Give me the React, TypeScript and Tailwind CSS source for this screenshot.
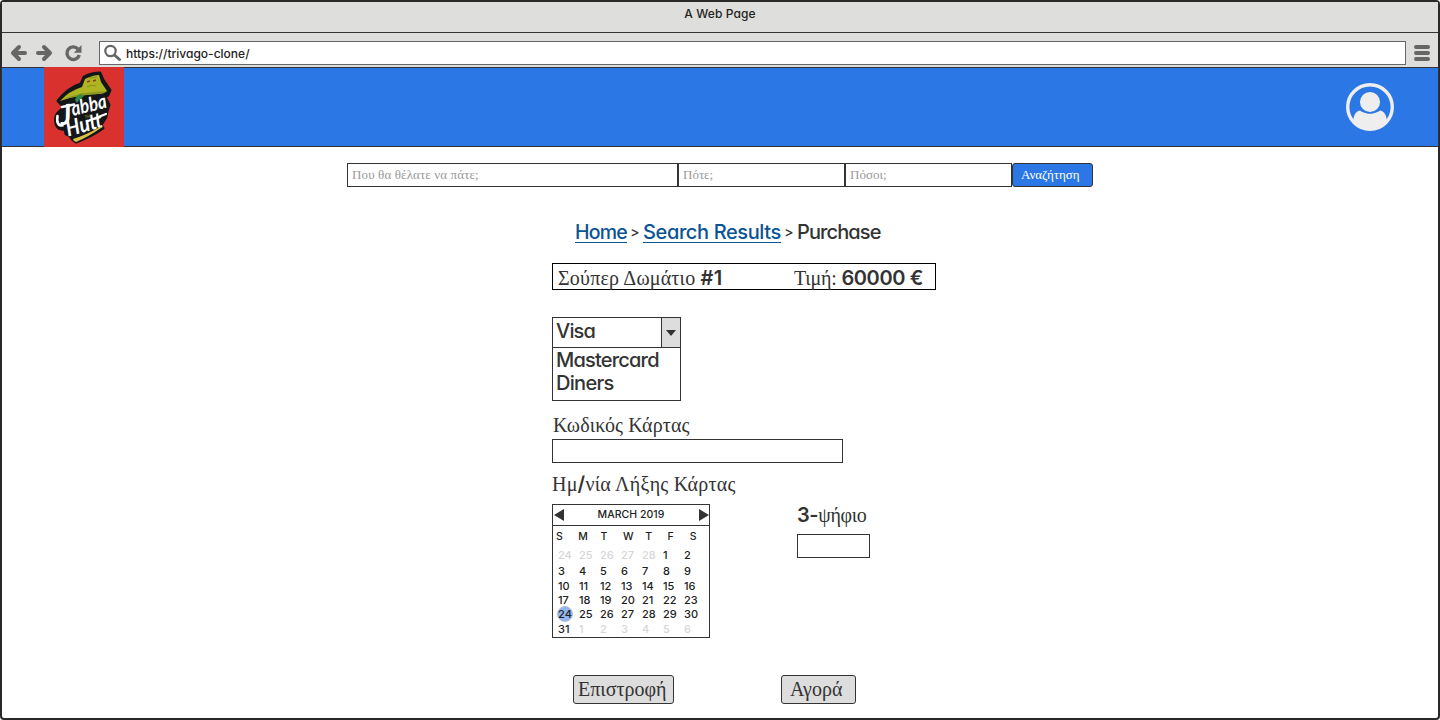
import React from "react";

const sans = "font-['Inter','Liberation_Sans',sans-serif] [font-feature-settings:'cv11'] font-medium";
const sansBold = "font-['Inter','Liberation_Sans',sans-serif] [font-feature-settings:'cv11'] font-semibold";
const serif = "font-['Liberation_Serif',serif] font-normal";

const weekdays = ["S", "M", "T", "W", "T", "F", "S"];
const weeks = [
  [24, 25, 26, 27, 28, 1, 2],
  [3, 4, 5, 6, 7, 8, 9],
  [10, 11, 12, 13, 14, 15, 16],
  [17, 18, 19, 20, 21, 22, 23],
  [24, 25, 26, 27, 28, 29, 30],
  [31, 1, 2, 3, 4, 5, 6],
];

function Logo() {
  return (
    <svg viewBox="0 0 80 80" className="h-[80px] w-[80px] shrink-0 font-['Lato',sans-serif] font-bold italic">
      <rect width="80" height="80" fill="#d9322e" />
      <path d="M14 34Q24 21 37 17L40 10Q48 6 56 6L59 13L66 23L64 28L61 30L65 38L63 44L62 50L57 58L59 61Q48 69 32 75L28 72L26 69L22 67L21 62Q14 63 12 57Q10 49 15 45L20 40Z" fill="#14171a" stroke="#14171a" strokeWidth="3" strokeLinejoin="round" />
      <path d="M16 34Q25 24 38 20L41 12Q49 8 55 8L57 15L63 24Q60 27 54 27Q36 27 16 34Z" fill="#afb522" />
      <path d="M17 33Q34 25 63 24Q60 27 54 27Q36 28 17 33Z" fill="#8c981f" />
      <path d="M43 15l3-1M49 14l3-1" stroke="#8b3a1c" strokeWidth="1.500" />
      <path d="M43 20q4-3 9-1M45 11l8-1" stroke="#7d851d" strokeWidth=".8" fill="none" />
      <path d="M18 40l12-2.500M13.500 49q-1.500 10 5 9.500" stroke="#fff" strokeWidth="2.600" fill="none" strokeLinecap="round" />
      <text transform="translate(17 58) rotate(-6)" fontSize="28" fill="#fff">J</text>
      <text transform="translate(29 49) rotate(-14)" fontSize="20" textLength="36" lengthAdjust="spacingAndGlyphs" fill="#fff">abba</text>
      <text transform="translate(41 51.500) rotate(-10)" fontSize="4" fill="#8f8a25">THE</text>
      <text transform="translate(24 69.500) rotate(-15)" fontSize="22" textLength="37" lengthAdjust="spacingAndGlyphs" fill="#fff">Hutt</text>
      <path d="M44 54l18-7" stroke="#fff" strokeWidth="2.200" strokeLinecap="round" />
      <path d="M31 33q1-5 8-7l-2 3 3 0-5 4-2 3z" fill="#2f8a4a" />
      <path d="M29 72Q42 68 56 60Q60 58 57 61Q44 70 32 75Q29 74 29 72Z" fill="#dcc044" />
    </svg>
  );
}

function Toolbar() {
  return (
    <div className="flex h-[34px] shrink-0 items-center bg-[#dededc]">
      <svg viewBox="0 0 97 34" className="h-[34px] w-[97px] shrink-0" fill="none" stroke="#666" strokeWidth="4" strokeLinecap="round" strokeLinejoin="round">
        <path d="M17 14L11 20L17 26M11 20H23" />
        <path d="M42 14L48 20L42 26M48 20H36" />
        <path d="M76 16A6.300 6.300 0 1 0 77.300 22" strokeWidth="3.400" strokeLinecap="butt" />
        <path d="M79.500 12V19.800H71.800Z" fill="#666" stroke="none" />
      </svg>
      <div className="mt-[6px] flex h-[24px] w-[1307px] items-center border border-[#666] bg-white">
        <svg viewBox="0 0 26 22" className="h-[22px] w-[26px] shrink-0" fill="none" stroke="#666">
          <circle cx="10.500" cy="9" r="5.200" strokeWidth="2.200" />
          <path d="M15 13.500L19.500 17.500" strokeWidth="3" strokeLinecap="round" />
        </svg>
        <span className={`${sans} mt-px text-[12px] text-[#222]`}>https://trivago-clone/</span>
      </div>
      <svg viewBox="0 0 32 34" className="h-[34px] w-[32px] shrink-0" stroke="#666" strokeWidth="4" strokeLinecap="round">
        <path d="M12 14H24M12 20H24M12 26H24" transform="translate(-2 0)" />
      </svg>
    </div>
  );
}

function Calendar() {
  return (
    <div className={`${sans} h-[134px] w-[158px] border border-[#333] text-[11px] text-[#222]`}>
      <div className="flex h-[21px] items-center justify-between border-b border-[#333]">
        <svg viewBox="0 0 12 12" className="h-[12px] w-[12px]" fill="#333"><path d="M11 0V12L1 6Z" /></svg>
        <span className="-mt-px text-[10.500px] tracking-[0.050px]">MARCH 2019</span>
        <svg viewBox="0 0 12 12" className="h-[12px] w-[12px]" fill="#333"><path d="M2 0V12L12 6Z" /></svg>
      </div>
      <div className="ml-[3px] flex h-[22px] items-center">
        {weekdays.map((d, i) => (
          <span key={i} className="w-[22.300px] shrink-0 text-[10.500px]">{d}</span>
        ))}
      </div>
      <div className="-mt-px ml-[5px] grid grid-cols-[repeat(7,21px)] grid-rows-[16px_16px_13.500px_14.500px_14.500px_14.500px]">
        {weeks.map((w, r) =>
          w.map((d, c) => {
            const outside = (r === 0 && d > 20) || (r === 5 && d < 10);
            const selected = r === 4 && c === 0;
            return (
              <span key={`${r}-${c}`} className={`flex items-center ${outside ? "text-[#d6d6d6]" : ""}`}>
                {selected ? (
                  <span className="-ml-[1px] flex h-[16px] w-[16px] shrink-0 items-center justify-center rounded-full border border-[#b7bfcc] bg-[#8fb6ef]">{d}</span>
                ) : (
                  d
                )}
              </span>
            );
          })
        )}
      </div>
    </div>
  );
}

export default function App() {
  return (
    <div className="flex h-[720px] w-[1440px] flex-col rounded-[4px] border-2 border-[#2b2829] bg-white text-[#333]">
      <div className={`${sans} flex h-[31px] shrink-0 justify-center border-b border-[#333] bg-[#dededc] pt-[3px] text-[12px] leading-[18px] tracking-[0.120px] text-[#222]`}>A Web Page</div>
      <Toolbar />
      <div className="-mx-px flex h-[80px] shrink-0 items-center justify-between border border-[#333] bg-[#2a77e5] pl-[42px] pr-[44px]">
        <Logo />
        <svg viewBox="0 0 48 48" className="h-[48px] w-[48px]">
          <circle cx="24" cy="24" r="22.300" fill="none" stroke="#eee" strokeWidth="3.400" />
          <path d="M7.500 38V35Q9 28 14 27.500Q17 30 24 30.500Q31 30 34 27.500Q39 28 40.500 35V38Q34 46.500 24 46.500Q14 46.500 7.500 38Z" fill="#eee" />
          <circle cx="24" cy="19" r="10.800" fill="#eee" stroke="#2a77e5" strokeWidth="1.500" />
        </svg>
      </div>

      <div className={`${serif} mt-[16px] flex h-[24px] shrink-0 justify-center text-[13px] leading-[22px] text-[#999]`}>
        <div className="w-[331px] border border-[#333] pl-[4px] tracking-[0.120px]">Που θα θέλατε να πάτε;</div>
        <div className="w-[167px] border border-[#333] pl-[4px]">Πότε;</div>
        <div className="w-[167px] border border-[#333] pl-[4px]">Πόσοι;</div>
        <div className="w-[81px] rounded-[3px] border border-[#333] bg-[#2a77e5] pl-[8px] text-white">Αναζήτηση</div>
      </div>

      <nav className={`${sans} ml-[573px] mt-[31px] flex h-[28px] shrink-0 text-[20px] leading-[28px]`}>
        <a className="h-[24.500px] w-[52px] whitespace-nowrap border-b-[1.500px] border-[#0b5394] text-[19.500px] tracking-[-0.800px] text-[#0b5394]">Home</a>
        <span className="w-[16px] text-center text-[14px]">&gt;</span>
        <a className="h-[24.500px] w-[138px] whitespace-nowrap border-b-[1.500px] border-[#0b5394] tracking-[-0.380px] text-[#0b5394]">Search Results</a>
        <span className="w-[16px] text-center text-[14px]">&gt;</span>
        <span className="tracking-[-0.900px]">Purchase</span>
      </nav>

      <main className="ml-[550px] mt-[17px] flex w-[384px] flex-col">
        <div className={`${serif} flex h-[27px] shrink-0 border border-black pl-[5px] text-[20px] leading-[29px]`}>
          <span className="w-[236px] whitespace-nowrap tracking-[0.200px]">Σούπερ Δωμάτιο <span className={sansBold}>#1</span></span>
          <span className="whitespace-nowrap tracking-[-0.200px]">Τιμή: <span className={`${sansBold} tracking-[-0.400px]`}>60000 €</span></span>
        </div>

        <div className={`${sans} mt-[27px] h-[84px] w-[129px] shrink-0 border border-[#333] text-[20px] leading-[23px]`}>
          <div className="flex h-[30px] border-b border-[#333]">
            <span className="flex-1 pl-[3px] leading-[27px] tracking-[-0.800px]">Visa</span>
            <span className="flex w-[19px] items-center justify-center border-l border-[#333] bg-[#ddd]">
              <svg viewBox="0 0 10 6" className="h-[6px] w-[10px]" fill="#333"><path d="M0 0H10L5 6Z" /></svg>
            </span>
          </div>
          <div className="pl-[3px] pt-px tracking-[-0.800px]">Mastercard</div>
          <div className="pl-[3px] tracking-[-0.700px]">Diners</div>
        </div>

        <div className={`${serif} mt-[13px] h-[25px] shrink-0 pl-px text-[20px] leading-[23px] tracking-[0.130px]`}>Κωδικός Κάρτας</div>
        <div className="h-[24px] w-[291px] shrink-0 border border-[#333]" />
        <div className={`${serif} mt-[9px] h-[25px] shrink-0 text-[20px] leading-[25px] tracking-[0.220px]`}>Ημ<span className={sansBold}>/</span>νία Λήξης Κάρτας</div>

        <div className="mt-[7px] flex shrink-0">
          <Calendar />
          <div className="ml-[87px]">
            <div className={`${serif} h-[30px] whitespace-nowrap text-[20px] leading-[22px] tracking-[-0.350px]`}><span className={sansBold}>3-</span>ψήφιο</div>
            <div className="h-[24px] w-[73px] border border-[#333]" />
          </div>
        </div>

        <div className={`${serif} ml-[21px] mt-[37px] flex shrink-0 text-[20px] leading-[26px]`}>
          <button className="h-[29px] w-[101px] rounded-[3px] border border-[#333] bg-[#ddd] pb-[2px] pl-[4px] text-left">Επιστροφή</button>
          <button className="ml-[107px] h-[29px] w-[75px] rounded-[3px] border border-[#333] bg-[#ddd] pb-[2px] pl-[8px] text-left">Αγορά</button>
        </div>
      </main>
    </div>
  );
}
